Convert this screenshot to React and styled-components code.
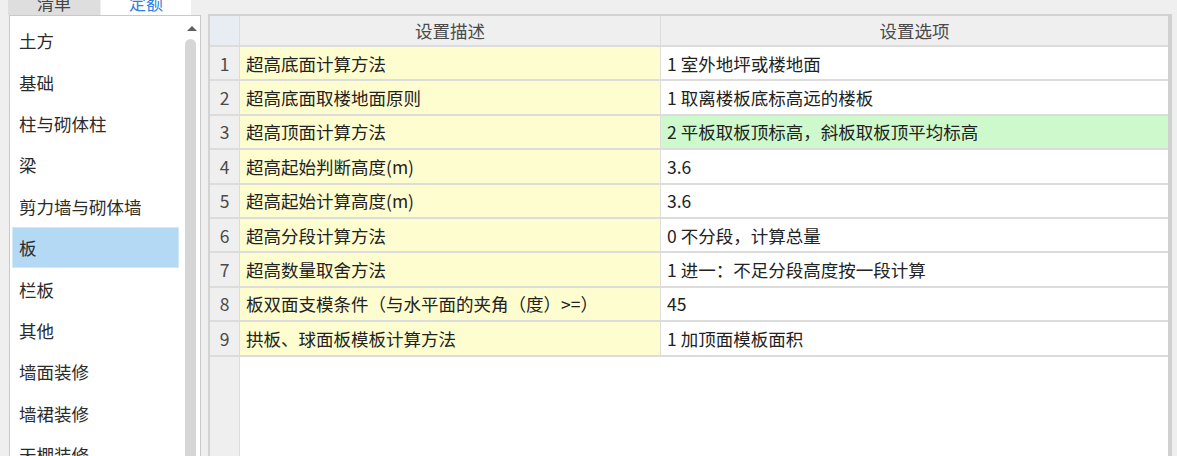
import styled, { createGlobalStyle } from "styled-components";

const GlobalStyle = createGlobalStyle`
  html, body {
    margin: 0;
    padding: 0;
    height: 100%;
    overflow: hidden;
  }
  body {
    background: #efefef;
    font-family: "Microsoft YaHei", "Noto Sans CJK SC", "Noto Sans", sans-serif;
    color: #333;
  }
`;

const categories = [
  "土方",
  "基础",
  "柱与砌体柱",
  "梁",
  "剪力墙与砌体墙",
  "板",
  "栏板",
  "其他",
  "墙面装修",
  "墙裙装修",
  "天棚装修",
];

const settings = [
  { desc: "超高底面计算方法", value: "1 室外地坪或楼地面" },
  { desc: "超高底面取楼地面原则", value: "1 取离楼板底标高远的楼板" },
  { desc: "超高顶面计算方法", value: "2 平板取板顶标高，斜板取板顶平均标高", changed: true },
  { desc: "超高起始判断高度(m)", value: "3.6" },
  { desc: "超高起始计算高度(m)", value: "3.6" },
  { desc: "超高分段计算方法", value: "0 不分段，计算总量" },
  { desc: "超高数量取舍方法", value: "1 进一：不足分段高度按一段计算" },
  { desc: "板双面支模条件（与水平面的夹角（度）>=）", value: "45" },
  { desc: "拱板、球面板模板计算方法", value: "1 加顶面模板面积" },
];

const Page = styled.div`
  height: 100vh;
  display: flex;
  flex-direction: column;
`;

const TabStrip = styled.div`
  height: 15px;
  flex: none;
  display: flex;
  gap: 1px;
  padding-left: 8px;
  overflow: hidden;
`;

const Tab = styled.div`
  width: ${(p) => (p.active ? "90px" : "92px")};
  height: 15px;
  display: flex;
  align-items: flex-end;
  justify-content: center;
  padding-bottom: 1px;
  box-sizing: border-box;
  background: ${(p) => (p.active ? "#ffffff" : "#dedede")};
  color: ${(p) => (p.active ? "#2f7fe0" : "#444")};
  font-size: 17px;
  line-height: 22px;
`;

const Main = styled.div`
  flex: 1;
  min-height: 0;
  display: flex;
  gap: 7px;
  padding-left: 9px;
`;

const SidePanel = styled.div`
  width: 192px;
  box-sizing: border-box;
  border: 1px solid #c9c9c9;
  border-bottom: none;
  background: #fff;
  display: flex;
  overflow: hidden;
`;

const CategoryList = styled.div`
  flex: 1;
  padding-top: 4px;
  overflow: hidden;
`;

const CategoryItem = styled.div`
  height: 41.4px;
  box-sizing: border-box;
  margin: 0 4px 0 2px;
  padding-left: 6px;
  display: flex;
  align-items: center;
  font-size: 17.5px;
  color: #2b2b2b;
  background: ${(p) => (p.selected ? "#b4d9f4" : "transparent")};
  border: 1px solid ${(p) => (p.selected ? "#d2e8f9" : "transparent")};
`;

const ScrollTrack = styled.div`
  width: 17px;
  flex: none;
  display: flex;
  flex-direction: column;
  align-items: center;
  padding-top: 8px;
`;

const ScrollThumb = styled.div`
  width: 11px;
  flex: 1;
  margin-top: 7px;
  margin-right: 2px;
  background: #d6d6d6;
  border-radius: 6px 6px 0 0;
`;

const TablePanel = styled.div`
  width: 964px;
  box-sizing: border-box;
  margin-top: -1px;
  border-top: 2px solid #d3d3d3;
  border-left: 2px solid #d3d3d3;
  border-right: 4px solid #d0d0d0;
  background: #fff;
  display: flex;
  flex-direction: column;
`;

const Row = styled.div`
  display: grid;
  grid-template-columns: 30px 421px 1fr;
  height: ${(p) => (p.header ? "31px" : "34.4px")};
  box-sizing: border-box;
  border-bottom: 2px solid #dcdcdc;
  flex: none;
`;

const Cell = styled.div`
  display: flex;
  align-items: center;
  justify-content: ${(p) => (p.center ? "center" : "flex-start")};
  padding-left: ${(p) => (p.center ? "0" : "6px")};
  border-right: 1px solid #dcdcdc;
  font-size: 17.5px;
  color: ${(p) => (p.muted ? "#4a4a4a" : "#222")};
  background: ${(p) => p.bg || "#fff"};
  white-space: nowrap;
  overflow: hidden;

  &:last-child {
    border-right: none;
  }
`;

const Filler = styled.div`
  flex: 1;
  display: grid;
  grid-template-columns: 30px 1fr;
`;

const FillerGutter = styled.div`
  background: #efefef;
  border-right: 1px solid #dcdcdc;
`;

const ArrowUp = () => (
  <svg width="12" height="8" viewBox="0 0 12 8">
    <path d="M1 7 L6 2 L11 7 Z" fill="#606060" />
  </svg>
);

export default function App() {
  return (
    <Page>
      <GlobalStyle />
      <TabStrip>
        <Tab>清单</Tab>
        <Tab active>定额</Tab>
      </TabStrip>
      <Main>
        <SidePanel>
          <CategoryList>
            {categories.map((c) => (
              <CategoryItem key={c} selected={c === "板"}>
                {c}
              </CategoryItem>
            ))}
          </CategoryList>
          <ScrollTrack>
            <ArrowUp />
            <ScrollThumb />
          </ScrollTrack>
        </SidePanel>
        <TablePanel>
          <Row header>
            <Cell center bg="#e8edf4" />
            <Cell center muted bg="#efefef">设置描述</Cell>
            <Cell center muted bg="#efefef">设置选项</Cell>
          </Row>
          {settings.map((s, i) => (
            <Row key={s.desc}>
              <Cell center muted bg="#efefef">{i + 1}</Cell>
              <Cell bg="#fefdd0">{s.desc}</Cell>
              <Cell bg={s.changed ? "#cdf9cd" : "#fff"}>{s.value}</Cell>
            </Row>
          ))}
          <Filler>
            <FillerGutter />
            <div />
          </Filler>
        </TablePanel>
      </Main>
    </Page>
  );
}
